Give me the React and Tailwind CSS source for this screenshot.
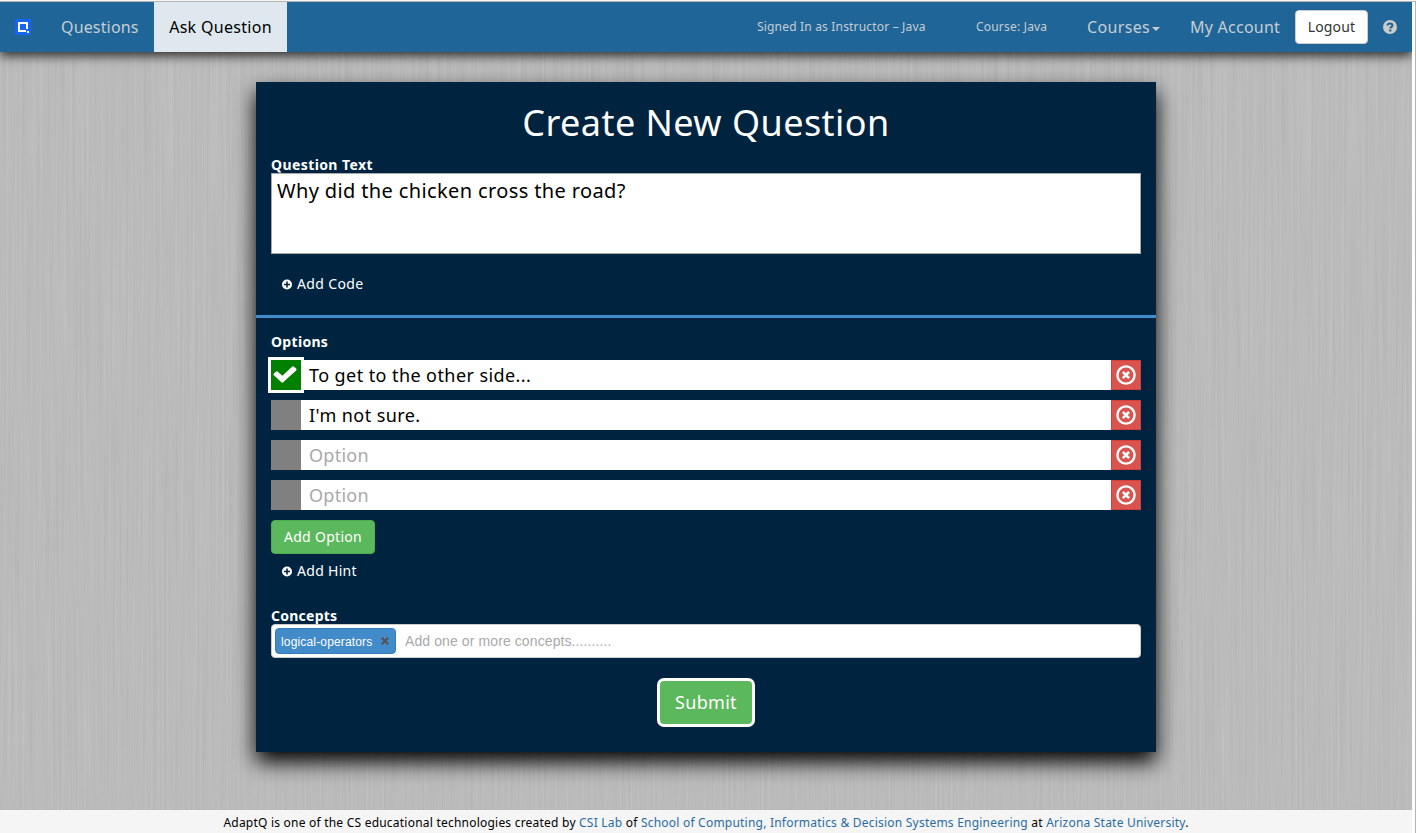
import React from "react";

const options = [
  { text: "To get to the other side...", correct: true },
  { text: "I'm not sure." },
  { text: "" },
  { text: "" },
];

function PlusCircle() {
  return (
    <svg className="mt-0.5 mr-1 size-[11px]" viewBox="0 0 11 11">
      <circle cx="5" cy="5.5" r="5" fill="#fff" />
      <path d="M5 2.5v6M2 5.5h6" stroke="#00243f" strokeWidth="1.6" />
    </svg>
  );
}

function RemoveIcon() {
  return (
    <svg className="size-5" viewBox="0 0 20 20" fill="none" stroke="#fff">
      <circle cx="10" cy="10" r="8.6" strokeWidth="2.4" />
      <path d="M6.9 6.9l6.2 6.2M13.1 6.9l-6.2 6.2" strokeWidth="2.6" />
    </svg>
  );
}

function BrushedMetal() {
  return (
    <svg className="absolute inset-0 -z-10 h-full w-full" preserveAspectRatio="none">
      <filter id="brushed" x="0" y="0" width="100%" height="100%" colorInterpolationFilters="sRGB">
        <feTurbulence type="fractalNoise" baseFrequency="0.45 0.005" numOctaves="3" seed="4" />
        <feColorMatrix values="0.065 0 0 0 0.7  0.065 0 0 0 0.7  0.065 0 0 0 0.7  0 0 0 0 1" />
      </filter>
      <rect width="100%" height="100%" filter="url(#brushed)" />
    </svg>
  );
}

function NavBar() {
  return (
    <nav className="relative flex h-[50px] shrink-0 items-center bg-[#1f6598] text-[#c6cdd2] shadow-[0_4px_10px_rgba(0,0,0,0.75)]">
      <svg className="ml-[15px] size-4" viewBox="0 0 16 16">
        <rect width="16" height="16" fill="#1565f5" />
        <path d="M11 12H4V4h8v6" fill="none" stroke="#fff" strokeWidth="2" />
        <rect x="12" y="12" width="2" height="2" fill="#fff" />
      </svg>
      <a className="ml-[30px] w-[93px] text-[16px] tracking-[0.15px]">Questions</a>
      <a className="flex h-full w-[133px] items-center justify-center bg-[#dee8ee] text-[16px] tracking-[0.3px] text-black">Ask Question</a>
      <span className="ml-[470px] w-[219px] text-[12px] tracking-[0.18px]">Signed In as Instructor – Java</span>
      <span className="w-[111px] text-[12px] tracking-[0.2px]">Course: Java</span>
      <a className="flex w-[103px] items-center text-[16px] tracking-[0.35px]">
        Courses
        <svg className="mt-1 ml-0.5 h-1 w-2" viewBox="0 0 8 4"><path d="M0 0h8L4 4z" fill="currentColor" /></svg>
      </a>
      <a className="w-[105px] text-[16px] tracking-[0.25px]">My Account</a>
      <button className="h-[34px] w-[73px] rounded border border-[#ccc] bg-white pb-px text-[14px] tracking-[0.15px] text-[#333]">Logout</button>
      <svg className="ml-[15px] size-[14px]" viewBox="0 0 14 14">
        <circle cx="7" cy="7" r="7" fill="#ccc" />
        <path d="M4.6 5.6C4.6 2.8 9.4 2.8 9.4 5.4c0 1.5-2.1 1.5-2.1 3.2" fill="none" stroke="#1f6598" strokeWidth="2.1" />
        <path d="M6.2 9.5h2.2v2H6.2z" fill="#1f6598" />
      </svg>
    </nav>
  );
}

function OptionRow({ option }) {
  return (
    <div className="flex h-[30px] bg-white">
      <div
        className={
          option.correct
            ? "flex size-[30px] shrink-0 items-center justify-center bg-[#008000] shadow-[0_0_0_3px_#fff]"
            : "size-[30px] shrink-0 bg-[#808080]"
        }
      >
        {option.correct && (
          <svg className="mr-0.5 mb-0.5 h-[22px] w-6" viewBox="90 90 1612 1612" preserveAspectRatio="none" fill="#fff">
            <path d="M1671 566q0 40-28 68l-724 724-136 136q-28 28-68 28t-68-28l-136-136-362-362q-28-28-28-68t28-68l136-136q28-28 68-28t68 28l294 295 656-657q28-28 68-28t68 28l136 136q28 28 28 68z" />
          </svg>
        )}
      </div>
      <span
        className={
          option.text
            ? "grow pl-2 text-[18px] leading-[30px] tracking-[0.42px] text-black"
            : "grow pl-2 text-[18px] leading-[30px] tracking-[0.25px] text-[#a9a9a9]"
        }
      >
        {option.text || "Option"}
      </span>
      <button className="flex size-[30px] items-center justify-center border border-[#d43f3a] bg-[#d9534f]">
        <RemoveIcon />
      </button>
    </div>
  );
}

function QuestionForm() {
  return (
    <section className="mt-[30px] ml-[256px] flex h-[670px] w-[900px] flex-col bg-[#00243f] text-white shadow-[0_10px_20px_rgba(0,0,0,1)]">
      <h1 className="mt-[15px] text-center text-[36px] leading-[52px] tracking-[0.45px]">Create New Question</h1>
      <div className="mx-[15px] mt-1.5 flex flex-col">
        <label className="h-[18px] text-[14px] leading-5 font-bold tracking-[0.4px]">Question Text</label>
        <div className="h-[81px] border border-[#a9a9a9] bg-white px-[5px] py-[3px] text-[20px] leading-7 tracking-[0.37px] text-black">
          Why did the chicken cross the road?
        </div>
        <a className="mt-[19px] ml-[11px] flex h-5 items-center text-[14px] tracking-[0.35px]">
          <PlusCircle />
          Add Code
        </a>
      </div>
      <hr className="mt-[22px] h-[3px] shrink-0 border-0 bg-[#428bca]" />
      <div className="mx-[15px] mt-[14px] flex flex-col">
        <label className="h-7 text-[14px] leading-5 font-bold tracking-[0.3px]">Options</label>
        <div className="flex flex-col gap-2.5">
          {options.map((option, i) => (
            <OptionRow key={i} option={option} />
          ))}
        </div>
        <button className="mt-2.5 h-[34px] w-[104px] rounded border border-[#4cae4c] bg-[#5cb85c] pb-0.5 text-[14px] tracking-[0.3px]">Add Option</button>
        <a className="mt-1.5 ml-[11px] flex h-5 items-center text-[14px] tracking-[0.3px]">
          <PlusCircle />
          Add Hint
        </a>
        <label className="mt-[26px] h-[18px] text-[14px] leading-5 font-bold tracking-[0.25px]">Concepts</label>
        <div className="flex h-[34px] items-center rounded border border-[#ccc] bg-white pl-[3px] font-['Liberation_Sans',sans-serif]">
          <span className="flex h-[26px] w-[121px] items-center rounded border border-[#357ebd] bg-[#428bca] pl-[5px] text-[12px] tracking-[0.16px]">
            <span className="w-[100px] pt-px">logical-operators</span>
            <svg className="size-2" viewBox="0 0 7 7"><path d="M.7.7l5.6 5.6M6.3.7L.7 6.3" stroke="#555" strokeWidth="2" /></svg>
          </span>
          <span className="ml-[9px] text-[14px] tracking-[0.1px] text-[#a9a9a9]">Add one or more concepts..........</span>
        </div>
        <button className="mt-[23px] h-[43px] w-[92px] self-center rounded-sm bg-[#5cb85c] text-[18px] tracking-[0.3px] shadow-[0_0_0_3px_#fff]">Submit</button>
      </div>
    </section>
  );
}

export default function App() {
  return (
    <div className="flex h-[833px] w-[1416px] flex-col overflow-hidden font-['Noto_Sans',sans-serif] whitespace-nowrap">
      <div className="h-0.5 shrink-0 border-b border-[#b4b4b4] bg-[#f4f4f4]" />
      <div className="flex h-[808px] shrink-0">
        <main className="relative isolate flex w-[1412px] flex-col overflow-hidden bg-[#bababa]">
          <BrushedMetal />
          <NavBar />
          <QuestionForm />
        </main>
        <div className="w-1 border-r border-[#b4b4b4] bg-white" />
      </div>
      <footer className="flex grow">
        <p className="w-[1412px] bg-[#f5f5f5] text-center text-[12px] leading-[25px] tracking-[0.22px] text-black">
          AdaptQ is one of the CS educational technologies created by <a className="text-[#2a6ca1]">CSI Lab</a> of{" "}
          <a className="text-[#2a6ca1]">School of Computing, Informatics &amp; Decision Systems Engineering</a> at{" "}
          <a className="text-[#2a6ca1]">Arizona State University</a>.
        </p>
        <div className="w-1 border-r border-[#b4b4b4] bg-white" />
      </footer>
    </div>
  );
}
